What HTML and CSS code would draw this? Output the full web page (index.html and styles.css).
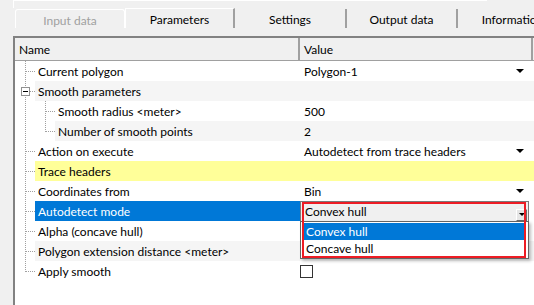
FILE: index.html
```html
<!DOCTYPE html>
<html lang="en">
<head>
    <meta charset="UTF-8">
    <title>Polygon parameters</title>
    <link rel="stylesheet" href="styles.css">
</head>
<body>

    <div class="frame-top"></div>
    <div class="tabs">
        <div class="tab disabled">Input data</div>
        <div class="tab active">Parameters</div>
        <div class="tab settings">Settings</div>
        <div class="tab">Output data</div>
        <div class="tab">Information</div>
    </div>

    <div class="grid">
        <div class="head">
            <div class="hcell name-col">Name</div>
            <div class="hcell value-head">Value</div>
        </div>

        <div class="row">
            <div class="name-col"><span class="tree tee"></span><span class="label">Current polygon</span></div>
            <div class="value">Polygon-1<span class="arrow"></span></div>
        </div>
        <div class="row alt">
            <div class="name-col"><span class="tree tee"><span class="toggle"></span></span><span class="label">Smooth parameters</span></div>
            <div class="value"></div>
        </div>
        <div class="row">
            <div class="name-col"><span class="tree pass"></span><span class="tree tee"></span><span class="label">Smooth radius &lt;meter&gt;</span></div>
            <div class="value">500</div>
        </div>
        <div class="row alt">
            <div class="name-col"><span class="tree pass"></span><span class="tree end"></span><span class="label">Number of smooth points</span></div>
            <div class="value">2</div>
        </div>
        <div class="row">
            <div class="name-col"><span class="tree tee"></span><span class="label">Action on execute</span></div>
            <div class="value">Autodetect from trace headers<span class="arrow"></span></div>
        </div>
        <div class="row note">
            <div class="name-col"><span class="tree tee"></span><span class="label">Trace headers</span></div>
            <div class="value"></div>
        </div>
        <div class="row">
            <div class="name-col"><span class="tree tee"></span><span class="label">Coordinates from</span></div>
            <div class="value">Bin<span class="arrow"></span></div>
        </div>
        <div class="row sel">
            <div class="name-col"><span class="tree tee"></span><span class="label">Autodetect mode</span></div>
            <div class="value editing">
                <div class="combo">
                    Convex hull
                    <span class="combo-btn"></span>
                </div>
                <div class="droplist">
                    <div class="opt current">Convex hull</div>
                    <div class="opt">Concave hull</div>
                </div>
                <div class="mark"></div>
            </div>
        </div>
        <div class="row">
            <div class="name-col"><span class="tree tee"></span><span class="label">Alpha (concave hull)</span></div>
            <div class="value"></div>
        </div>
        <div class="row alt">
            <div class="name-col"><span class="tree tee"></span><span class="label">Polygon extension distance &lt;meter&gt;</span></div>
            <div class="value"></div>
        </div>
        <div class="row">
            <div class="name-col"><span class="tree end"></span><span class="label">Apply smooth</span></div>
            <div class="value"><span class="check"></span></div>
        </div>
    </div>

</body>
</html>
```

FILE: styles.css
```css
body {
    margin: 0;
    height: 305px;
    overflow: hidden;
    background: #f0f0f0;
    font-family: Lato, "Noto Sans", sans-serif;
    font-size: 12px;
    color: #000;
}
.frame-top {
    margin-left: 13px;
    width: 474px;
    height: 8px;
    box-sizing: border-box;
    border-top: 1px solid #fff;
    border-left: 1px solid #fff;
}
.tabs {
    display: flex;
    align-items: flex-end;
    height: 20px;
    padding-left: 15px;
}
.tab {
    box-sizing: border-box;
    width: 111px;
    height: 19px;
    padding-top: 2px;
    display: flex;
    align-items: center;
    justify-content: center;
    border-right: 2px solid #a0a0a0;
    flex: none;
}
.tab.disabled {
    width: 110px;
    color: #a0a0a0;
    border: 1px solid #fff;
    border-bottom: none;
    border-radius: 3px 3px 0 0;
}
.tab.active {
    width: 110px;
    height: 20px;
    border-top: 1px solid #fff;
    border-left: 1px solid #fff;
}
.tab.settings {
    width: 112px;
}
.grid {
    margin: 8px 0 0 13px;
    height: 269px;
    background: #fff;
    border-top: 2px solid #828282;
    border-left: 2px solid #828282;
}
.head {
    display: flex;
    height: 22px;
    background: #f0f0f0;
    border-bottom: 1px solid #a0a0a0;
}
.hcell {
    box-sizing: border-box;
    padding: 1px 0 0 4px;
    line-height: 22px;
    border-right: 2px solid #a0a0a0;
}
.value-head {
    width: 233px;
}
.name-col {
    box-sizing: border-box;
    width: 285px;
    flex: none;
    display: flex;
}
.row {
    display: flex;
    height: 20px;
    line-height: 21px;
}
.tree {
    width: 20px;
    height: 20px;
    flex: none;
    background:
        repeating-linear-gradient(#a0a0a0 0 1px, transparent 1px 2px) 10px 0 / 1px 100% no-repeat;
}
.tree.tee {
    background:
        repeating-linear-gradient(to right, #a0a0a0 0 1px, transparent 1px 2px) 11px 10px / 9px 1px no-repeat,
        repeating-linear-gradient(#a0a0a0 0 1px, transparent 1px 2px) 10px 0 / 1px 100% no-repeat;
}
.tree.end {
    background:
        repeating-linear-gradient(to right, #a0a0a0 0 1px, transparent 1px 2px) 11px 10px / 9px 1px no-repeat,
        repeating-linear-gradient(#a0a0a0 0 1px, transparent 1px 2px) 10px 0 / 1px 11px no-repeat;
}
.toggle {
    display: block;
    box-sizing: border-box;
    width: 9px;
    height: 9px;
    margin: 6px 0 0 6px;
    border: 1px solid #919191;
    background: #fff linear-gradient(#000, #000) center / 5px 1px no-repeat;
}
.label {
    flex: 1;
    padding-left: 3px;
    white-space: nowrap;
}
.value {
    flex: 1;
    display: flex;
    align-items: center;
    padding-left: 4px;
    white-space: nowrap;
}
.row.alt .label, .row.alt .value {
    background: #f5f5f5;
}
.row.note .label, .row.note .value {
    background: #ffff99;
}
.row.sel .label {
    background: #0078d7;
    color: #fff;
}
.arrow {
    margin-left: auto;
    margin-right: 10px;
    border-top: 4px solid #000;
    border-left: 4px solid transparent;
    border-right: 4px solid transparent;
}
.value.editing {
    position: relative;
    padding-left: 0;
    align-items: flex-start;
}
.combo {
    box-sizing: border-box;
    width: 229px;
    height: 20px;
    padding-left: 4px;
    display: flex;
    align-items: center;
    background: #f0f0f0;
    border: 1px solid #7a7a7a;
    border-bottom: none;
}
.combo-btn {
    box-sizing: border-box;
    width: 11px;
    height: 12px;
    margin: 6px 1px 0 auto;
    background: #e6e6e6;
    border-top: 1px solid #fff;
    border-left: 1px solid #fff;
    border-right: 1px solid #696969;
    border-bottom: 1px solid #696969;
    display: flex;
    justify-content: center;
    align-items: center;
}
.combo-btn::before {
    content: "";
    border-top: 3px solid #000;
    border-left: 3px solid transparent;
    border-right: 3px solid transparent;
}
.droplist {
    position: absolute;
    left: 0;
    top: 20px;
    box-sizing: border-box;
    width: 229px;
    height: 38px;
    padding: 1px 2px;
    background: #fff;
    border: 1px solid #646464;
    box-shadow: 2px 2px 3px rgba(0, 0, 0, 0.25);
    z-index: 2;
}
.opt {
    height: 17px;
    line-height: 17px;
    padding-left: 3px;
}
.opt.current {
    background: #0078d7;
    color: #fff;
}
.mark {
    position: absolute;
    left: 2px;
    top: 1px;
    box-sizing: border-box;
    width: 224px;
    height: 56px;
    border: 2px solid #ed1c24;
    z-index: 3;
}
.check {
    box-sizing: border-box;
    width: 13px;
    height: 13px;
    margin-left: -4px;
    border: 1px solid #333;
    background: #fff;
}
```
